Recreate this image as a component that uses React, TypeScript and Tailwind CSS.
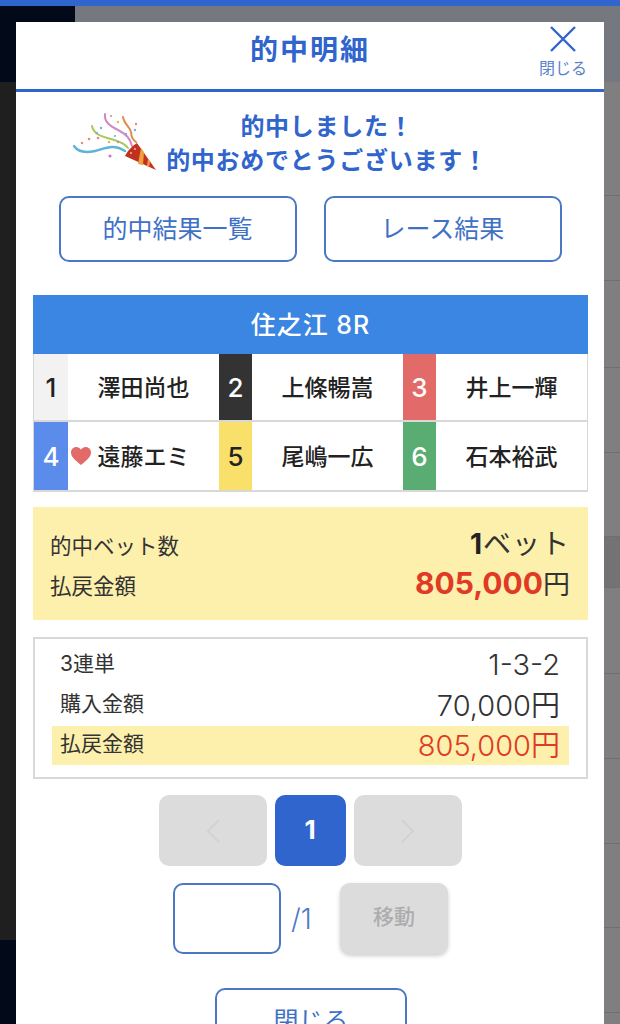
const RACERS = [
  { no: "1", name: "澤田尚也", cell: "w-[34px] bg-[#f2f2f2] text-[#222]" },
  { no: "2", name: "上條暢嵩", cell: "w-[33px] bg-[#333333] text-white" },
  { no: "3", name: "井上一輝", cell: "w-[33px] bg-[#e26a68] text-white" },
  { no: "4", name: "遠藤エミ", cell: "w-[34px] bg-[#5b8ceb] text-white", lady: true },
  { no: "5", name: "尾嶋一広", cell: "w-[33px] bg-[#f8e06b] text-[#222]" },
  { no: "6", name: "石本裕武", cell: "w-[33px] bg-[#59ad72] text-white" },
];

const BG_ROWS = [114, 85, 87, 85, 84, 51, 86, 85, 85, 84, 85];

function PartyPopper() {
  return (
    <svg width="86" height="66" viewBox="0 0 86 66" fill="none" className="shrink-0">
      <path d="M1 37c4 6 12 7 21 5s18-8 30 0" stroke="#5fb3d9" strokeWidth="2.5" strokeLinecap="round" />
      <path d="M19 17c2 10 13 11 22 14 7 2 11 4 14 8" stroke="#a7c95f" strokeWidth="2" strokeLinecap="round" />
      <path d="M32 5c-1 8 5 12 13 16 8 4 12 8 14 16" stroke="#d587c4" strokeWidth="2" strokeLinecap="round" />
      <path d="M50 8c1 7 7 10 8 15 1 4-1 5 5 10" stroke="#e58a4a" strokeWidth="2" strokeLinecap="round" />
      <path d="M52 47c3-6 7-10 12-13l19 27z" fill="#c0321f" />
      <path d="M68 39l3 4-1 13-5-1zM75 50l2 3-1 5-2-1z" fill="#ef9f3c" />
      <g fill="#e58a7a">
        <circle cx="9" cy="34" r="1.2" />
        <circle cx="16" cy="30" r="1.3" />
        <circle cx="25" cy="29" r="1.3" />
        <circle cx="37" cy="47" r="1.6" fill="#c77cc0" />
        <circle cx="36" cy="33" r="1.2" fill="#e9b14f" />
        <circle cx="45" cy="33" r="1.2" />
        <circle cx="28" cy="19" r="1.2" fill="#6cb6dd" />
        <circle cx="38" cy="7" r="1.1" />
        <circle cx="45" cy="13" r="1.2" fill="#e9b14f" />
        <circle cx="63" cy="15" r="1.2" />
        <circle cx="62" cy="21" r="1.2" fill="#6cb6dd" />
        <circle cx="53" cy="25" r="1.2" fill="#6cb6dd" />
        <circle cx="24" cy="24" r="1.1" fill="#6cb6dd" />
        <circle cx="42" cy="27" r="1.1" fill="#6cb6dd" />
        <circle cx="58" cy="44" r="1" fill="#f3b9a0" />
        <circle cx="62" cy="40" r="1" fill="#f3b9a0" />
      </g>
    </svg>
  );
}

function Outline({ label, className }: { label: string; className: string }) {
  return (
    <button className={`rounded-[10px] border-2 border-[#4a78c4] text-[25px] leading-none text-[#3f72c6] ${className}`}>
      {label}
    </button>
  );
}

export default function App() {
  return (
    <div
      className="relative h-[1024px] w-[620px] overflow-hidden bg-[#7f7f7f]"
      style={{ fontFamily: 'Inter, "Noto Sans CJK JP", sans-serif' }}
    >
      <div className="h-[6px] bg-[#2f65cc]" />
      <div className="flex h-[76px]">
        <div className="w-[75px] bg-[#020a1a]" />
        <div className="flex-1 bg-[#75797f]" />
      </div>
      <div className="flex">
        <div className="flex w-[16px] flex-col">
          <div className="h-[858px] bg-[#1f1f1f]" />
          <div className="h-[84px] bg-[#020a1a]" />
        </div>
        <div className="flex-1">
          {BG_ROWS.map((h, i) => (
            <div
              key={i}
              style={{ height: h }}
              className={i === 5 ? "border-b border-[#6f6f6f] bg-[#737373]" : "border-b border-[#6f6f6f]"}
            />
          ))}
        </div>
      </div>

      {/* modal */}
      <div className="absolute bottom-0 left-[16px] top-[22px] w-[588px] bg-white">
        <div className="relative flex h-[70px] items-center justify-center border-b-[3px] border-[#2f65cc] pb-[11px]">
          <h1 className="text-[28px] font-bold tracking-[2px] text-[#2f65cc]">的中明細</h1>
          <button className="absolute right-[17px] top-[4px] flex flex-col items-center text-[16px] leading-none text-[#5b82c9]">
            <svg width="26" height="26" viewBox="0 0 26 26" fill="none" stroke="#2f65cc" strokeWidth="2.4">
              <path d="M1 1l24 24M25 1L1 25" />
            </svg>
            <span className="mt-[8px]">閉じる</span>
          </button>
        </div>

        <div className="flex h-[104px] items-start pl-[57px] pt-[17px]">
          <PartyPopper />
          <p className="ml-[3px] mt-[1px] w-[330px] text-center text-[24px] font-bold leading-[34px] tracking-[0.75px] text-[#2f65cc]">
            的中しました！
            <br />
            的中おめでとうございます！
          </p>
        </div>

        <div className="flex justify-center gap-[27px]">
          <Outline label="的中結果一覧" className="h-[66px] w-[238px]" />
          <Outline label="レース結果" className="h-[66px] w-[238px]" />
        </div>

        <div className="ml-[17px] mr-[16px] mt-[33px] flex h-[59px] items-center justify-center bg-[#3b85e3] pt-[2px] text-[25px] font-medium tracking-[1px] text-white">
          住之江 8R
        </div>
        <div className="ml-[17px] mr-[16px] grid grid-cols-[185px_184px_184px] border-x border-b-2 border-[#d8d8d8]">
          {RACERS.map((r, i) => (
            <div key={r.no} className={`flex h-[68px] ${i < 3 ? "border-b-2 border-[#d8d8d8]" : ""}`}>
              <div className={`flex items-center justify-center text-[26px] font-medium ${r.cell}`}>{r.no}</div>
              <div className="relative flex flex-1 items-center justify-center pt-[2px] text-[23px] font-medium text-[#222]">
                {r.lady && (
                  <svg width="20" height="18" viewBox="0 0 20 18" className="absolute left-[3px] top-[25px]">
                    <path d="M10 18C4 13 0 10 0 5.500C0 2.300 2.400 0 5.300 0C7.200 0 9 1 10 2.800C11 1 12.800 0 14.700 0C17.600 0 20 2.300 20 5.500C20 10 16 13 10 18Z" fill="#e26a68" />
                  </svg>
                )}
                {r.name}
              </div>
            </div>
          ))}
        </div>

        <div className="ml-[17px] mr-[16px] mt-[15px] flex h-[113px] flex-col justify-center bg-[#fcf0ac] pl-[17px] pr-[18px] text-[#333]">
          <div className="flex h-[40px] items-center justify-between text-[21.500px]">
            <span className="translate-y-[3px]">的中ベット数</span>
            <span className="text-[28px] tracking-[1px]">
              <b className="text-[#222]">1</b>ベット
            </span>
          </div>
          <div className="flex h-[40px] items-center justify-between text-[21.500px]">
            <span className="translate-y-[3px]">払戻金額</span>
            <span className="text-[27px]">
              <b className="text-[30px] text-[#e03a26]">805,000</b>円
            </span>
          </div>
        </div>

        <div className="ml-[17px] mr-[16px] mt-[17px] h-[142px] border-2 border-[#d8d8d8] px-[17px] pt-[9px] text-[#333]">
          <div className="flex h-[38px] items-center justify-between pl-[8px] pr-[9px] text-[21px]">
            <span className="-translate-y-[3px]">3連単</span>
            <span className="-translate-y-[2px] text-[29px] font-[350]">1-3-2</span>
          </div>
          <div className="flex h-[40px] items-center justify-between pl-[8px] pr-[9px] text-[21px]">
            <span className="-translate-y-[2px]">購入金額</span>
            <span className="text-[29px] font-[350]">70,000円</span>
          </div>
          <div className="flex h-[39px] items-center justify-between bg-[#fcf0ac] pl-[8px] pr-[9px] text-[21px]">
            <span className="-translate-y-[2px]">払戻金額</span>
            <span className="text-[29px] font-[350] text-[#e03a26]">805,000円</span>
          </div>
        </div>

        <div className="mt-[16px] flex justify-center gap-[8px]">
          <div className="flex h-[71px] w-[108px] items-center justify-center rounded-[10px] bg-[#dcdcdc]">
            <svg width="16" height="26" viewBox="0 0 16 26" fill="none" stroke="#d2d2d2" strokeWidth="2">
              <path d="M14 2L3 13l11 11" />
            </svg>
          </div>
          <div className="flex h-[71px] w-[71px] items-center justify-center rounded-[10px] bg-[#2f65cc] pb-[2px] text-[26px] font-bold text-white">1</div>
          <div className="flex h-[71px] w-[108px] items-center justify-center rounded-[10px] bg-[#dcdcdc]">
            <svg width="16" height="26" viewBox="0 0 16 26" fill="none" stroke="#d2d2d2" strokeWidth="2">
              <path d="M2 2l11 11L2 24" />
            </svg>
          </div>
        </div>

        <div className="ml-[157px] mt-[17px] flex items-center">
          <div className="h-[71px] w-[108px] rounded-[10px] border-2 border-[#4a78c4]" />
          <span className="ml-[10px] w-[49px] text-[28px] font-[350] text-[#4a78c4]">/1</span>
          <div className="flex h-[71px] w-[108px] items-center justify-center rounded-[10px] bg-[#dcdcdc] pb-[3px] text-[21px] font-medium text-[#adadad] shadow-[0_2px_4px_rgba(0,0,0,0.2)]">
            移動
          </div>
        </div>

        <div className="ml-[199px] mt-[34px] flex">
          <Outline label="閉じる" className="h-[66px] w-[192px]" />
        </div>
      </div>
    </div>
  );
}
